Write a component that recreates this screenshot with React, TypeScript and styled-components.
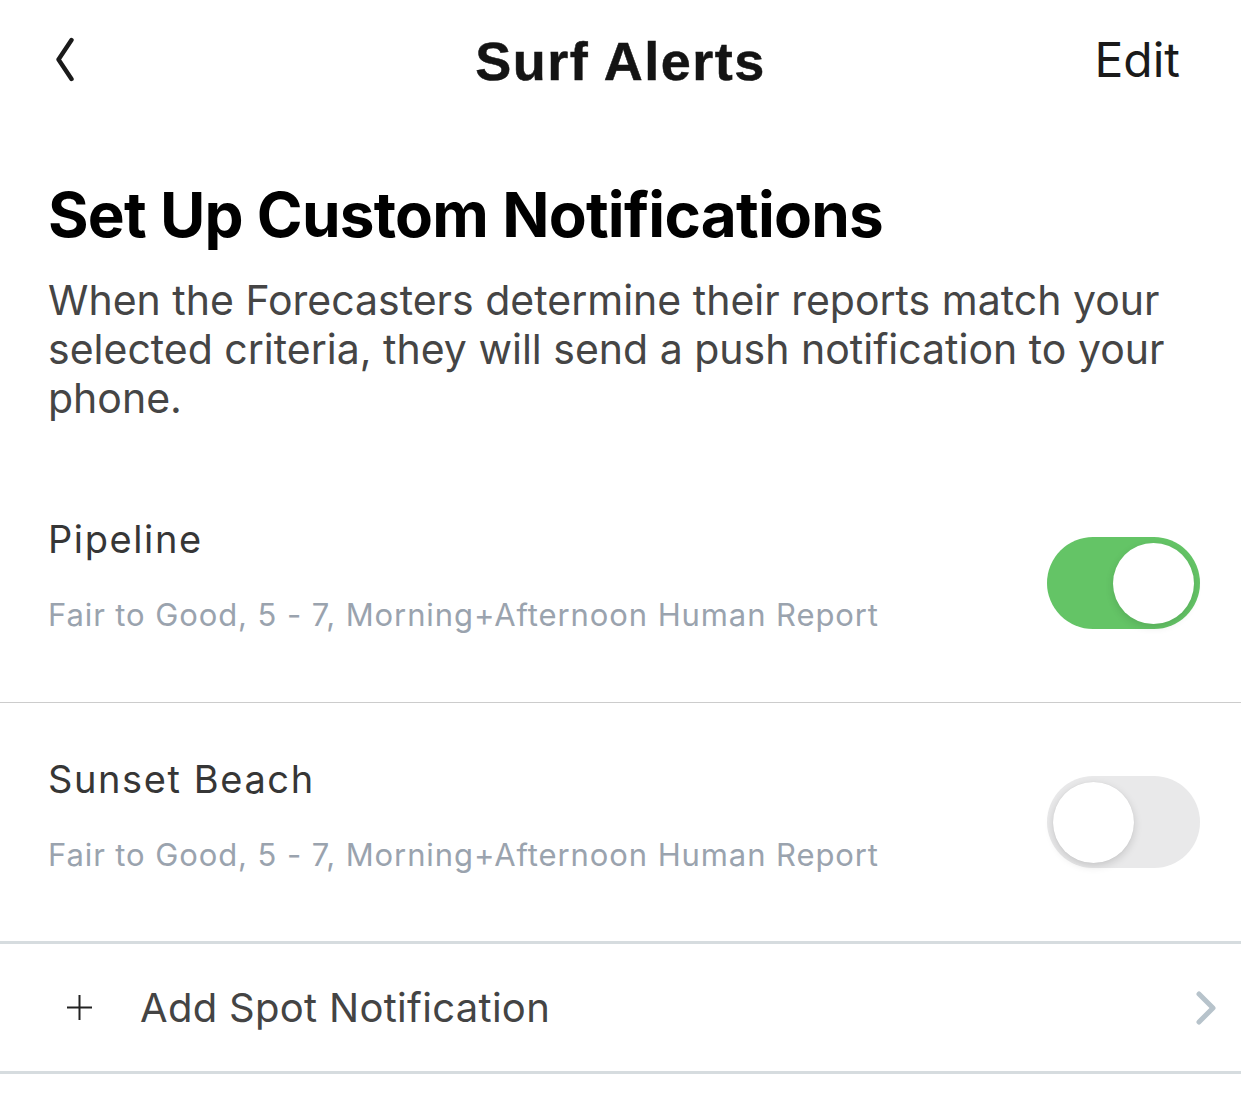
import React, { useState } from "react";
import styled, { createGlobalStyle } from "styled-components";

const GlobalStyle = createGlobalStyle`
  html, body {
    margin: 0;
    padding: 0;
    background: #ffffff;
    font-family: Inter, "Noto Sans", sans-serif;
    -webkit-font-smoothing: antialiased;
  }
  * { box-sizing: border-box; }
`;

const Page = styled.div`
  width: 1241px;
  min-height: 1100px;
  background: #ffffff;
  display: flex;
  flex-direction: column;
`;

const Header = styled.header`
  height: 120px;
  display: grid;
  grid-template-columns: 1fr auto 1fr;
  align-items: center;
  padding: 0 56px;
`;

const BackButton = styled.button`
  justify-self: start;
  background: none;
  border: none;
  padding: 0;
  width: 18px;
  height: 46px;
  display: flex;
  align-items: center;
  cursor: pointer;
`;

const Title = styled.h1`
  margin: 0;
  font-family: "Liberation Sans", Arial, sans-serif;
  font-weight: 700;
  font-size: 54px;
  letter-spacing: 1.5px;
  color: #141414;
  line-height: 1;
  padding-top: 2px;
  -webkit-text-stroke: 0.5px #141414;
`;

const EditButton = styled.button`
  justify-self: end;
  background: none;
  border: none;
  padding: 0;
  margin-right: 5px;
  font-family: Inter, sans-serif;
  font-size: 48px;
  font-weight: 400;
  color: #1a1a1a;
  line-height: 1;
  cursor: pointer;
`;

const Intro = styled.section`
  padding: 58px 50px 0 48px;
  display: flex;
  flex-direction: column;
  gap: 24px;
`;

const Heading = styled.h2`
  margin: 0;
  font-family: Inter, sans-serif;
  font-weight: 700;
  font-size: 62px;
  letter-spacing: -0.75px;
  line-height: 74px;
  color: #000000;
`;

const Description = styled.p`
  margin: 0;
  font-family: Inter, sans-serif;
  font-weight: 400;
  font-size: 41px;
  line-height: 49px;
  color: #454545;
`;

const List = styled.div`
  margin-top: 40px;
  display: flex;
  flex-direction: column;
`;

const SpotRow = styled.div<{ $heavy?: boolean }>`
  height: ${(p) => (p.$heavy ? 241 : 240)}px;
  display: flex;
  align-items: center;
  justify-content: space-between;
  padding: 0 41px 0 48px;
  border-bottom: ${(p) => (p.$heavy ? "3px solid #d6dcdf" : "1px solid #cccccc")};
`;

const SpotText = styled.div`
  display: flex;
  flex-direction: column;
  gap: 36px;
  margin-top: -15px;
`;

const SpotName = styled.div`
  font-family: Inter, sans-serif;
  font-size: 38px;
  line-height: 44px;
  letter-spacing: 1.6px;
  color: #363636;
`;

const SpotMeta = styled.div`
  font-family: Inter, sans-serif;
  font-size: 31px;
  line-height: 36px;
  letter-spacing: 0.9px;
  color: #9aa3ae;
`;

const Track = styled.button<{ $on: boolean }>`
  position: relative;
  width: 153px;
  height: 92px;
  border-radius: 46px;
  border: none;
  padding: 0;
  cursor: pointer;
  background: ${(p) => (p.$on ? "#64c466" : "#e9e9ea")};
  transition: background 0.2s;
`;

const Knob = styled.span<{ $on: boolean }>`
  position: absolute;
  top: 6px;
  left: ${(p) => (p.$on ? "66px" : "6px")};
  width: 81px;
  height: 81px;
  border-radius: 50%;
  background: #ffffff;
  box-shadow: ${(p) =>
    p.$on
      ? "0 3px 8px rgba(0,0,0,0.12)"
      : "0 3px 8px rgba(0,0,0,0.15), 0 0 1px rgba(0,0,0,0.1)"};
  transition: left 0.2s;
`;

const AddRow = styled.button`
  height: 130px;
  width: 100%;
  display: flex;
  align-items: center;
  background: #ffffff;
  border: none;
  border-bottom: 3px solid #d6dcdf;
  padding: 0 24px 0 66px;
  cursor: pointer;
  text-align: left;
`;

const PlusIcon = styled.span`
  width: 27px;
  height: 27px;
  display: flex;
  margin-right: 47px;
`;

const AddLabel = styled.span`
  flex: 1;
  font-family: Inter, sans-serif;
  font-size: 40px;
  color: #444444;
  letter-spacing: 0.3px;
`;

const Chevron = styled.span`
  display: flex;
  width: 22px;
  height: 36px;
`;

type Spot = { name: string; meta: string; on: boolean };

const spotsInit: Spot[] = [
  { name: "Pipeline", meta: "Fair to Good, 5 - 7, Morning+Afternoon Human Report", on: true },
  { name: "Sunset Beach", meta: "Fair to Good, 5 - 7, Morning+Afternoon Human Report", on: false },
];

function Toggle({ on, onChange }: { on: boolean; onChange: () => void }) {
  return (
    <Track $on={on} onClick={onChange} aria-pressed={on}>
      <Knob $on={on} />
    </Track>
  );
}

export default function App() {
  const [spots, setSpots] = useState(spotsInit);
  return (
    <Page>
      <GlobalStyle />
      <Header>
        <BackButton aria-label="Back">
          <svg width="18" height="46" viewBox="0 0 18 46" fill="none">
            <path
              d="M15.5 3 L2.5 22.5 L15.5 42"
              stroke="#1a1a1a"
              strokeWidth="4.4"
              strokeLinecap="round"
              strokeLinejoin="round"
            />
          </svg>
        </BackButton>
        <Title>Surf Alerts</Title>
        <EditButton>Edit</EditButton>
      </Header>
      <Intro>
        <Heading>Set Up Custom Notifications</Heading>
        <Description>
          When the Forecasters determine their reports match your selected criteria, they will
          send a push notification to your phone.
        </Description>
      </Intro>
      <List>
        {spots.map((s, i) => (
          <SpotRow key={s.name} $heavy={i === spots.length - 1}>
            <SpotText>
              <SpotName>{s.name}</SpotName>
              <SpotMeta>{s.meta}</SpotMeta>
            </SpotText>
            <Toggle
              on={s.on}
              onChange={() =>
                setSpots((prev) => prev.map((p, j) => (j === i ? { ...p, on: !p.on } : p)))
              }
            />
          </SpotRow>
        ))}
        <AddRow>
          <PlusIcon>
            <svg width="27" height="27" viewBox="0 0 27 27">
              <path d="M13.5 1 V26 M1 13.5 H26" stroke="#222" strokeWidth="2" />
            </svg>
          </PlusIcon>
          <AddLabel>Add Spot Notification</AddLabel>
          <Chevron>
            <svg width="22" height="36" viewBox="0 0 22 36" fill="none">
              <path
                d="M4 4 L18 18 L4 32"
                stroke="#b7c3cb"
                strokeWidth="5"
                strokeLinecap="round"
                strokeLinejoin="round"
              />
            </svg>
          </Chevron>
        </AddRow>
      </List>
    </Page>
  );
}
